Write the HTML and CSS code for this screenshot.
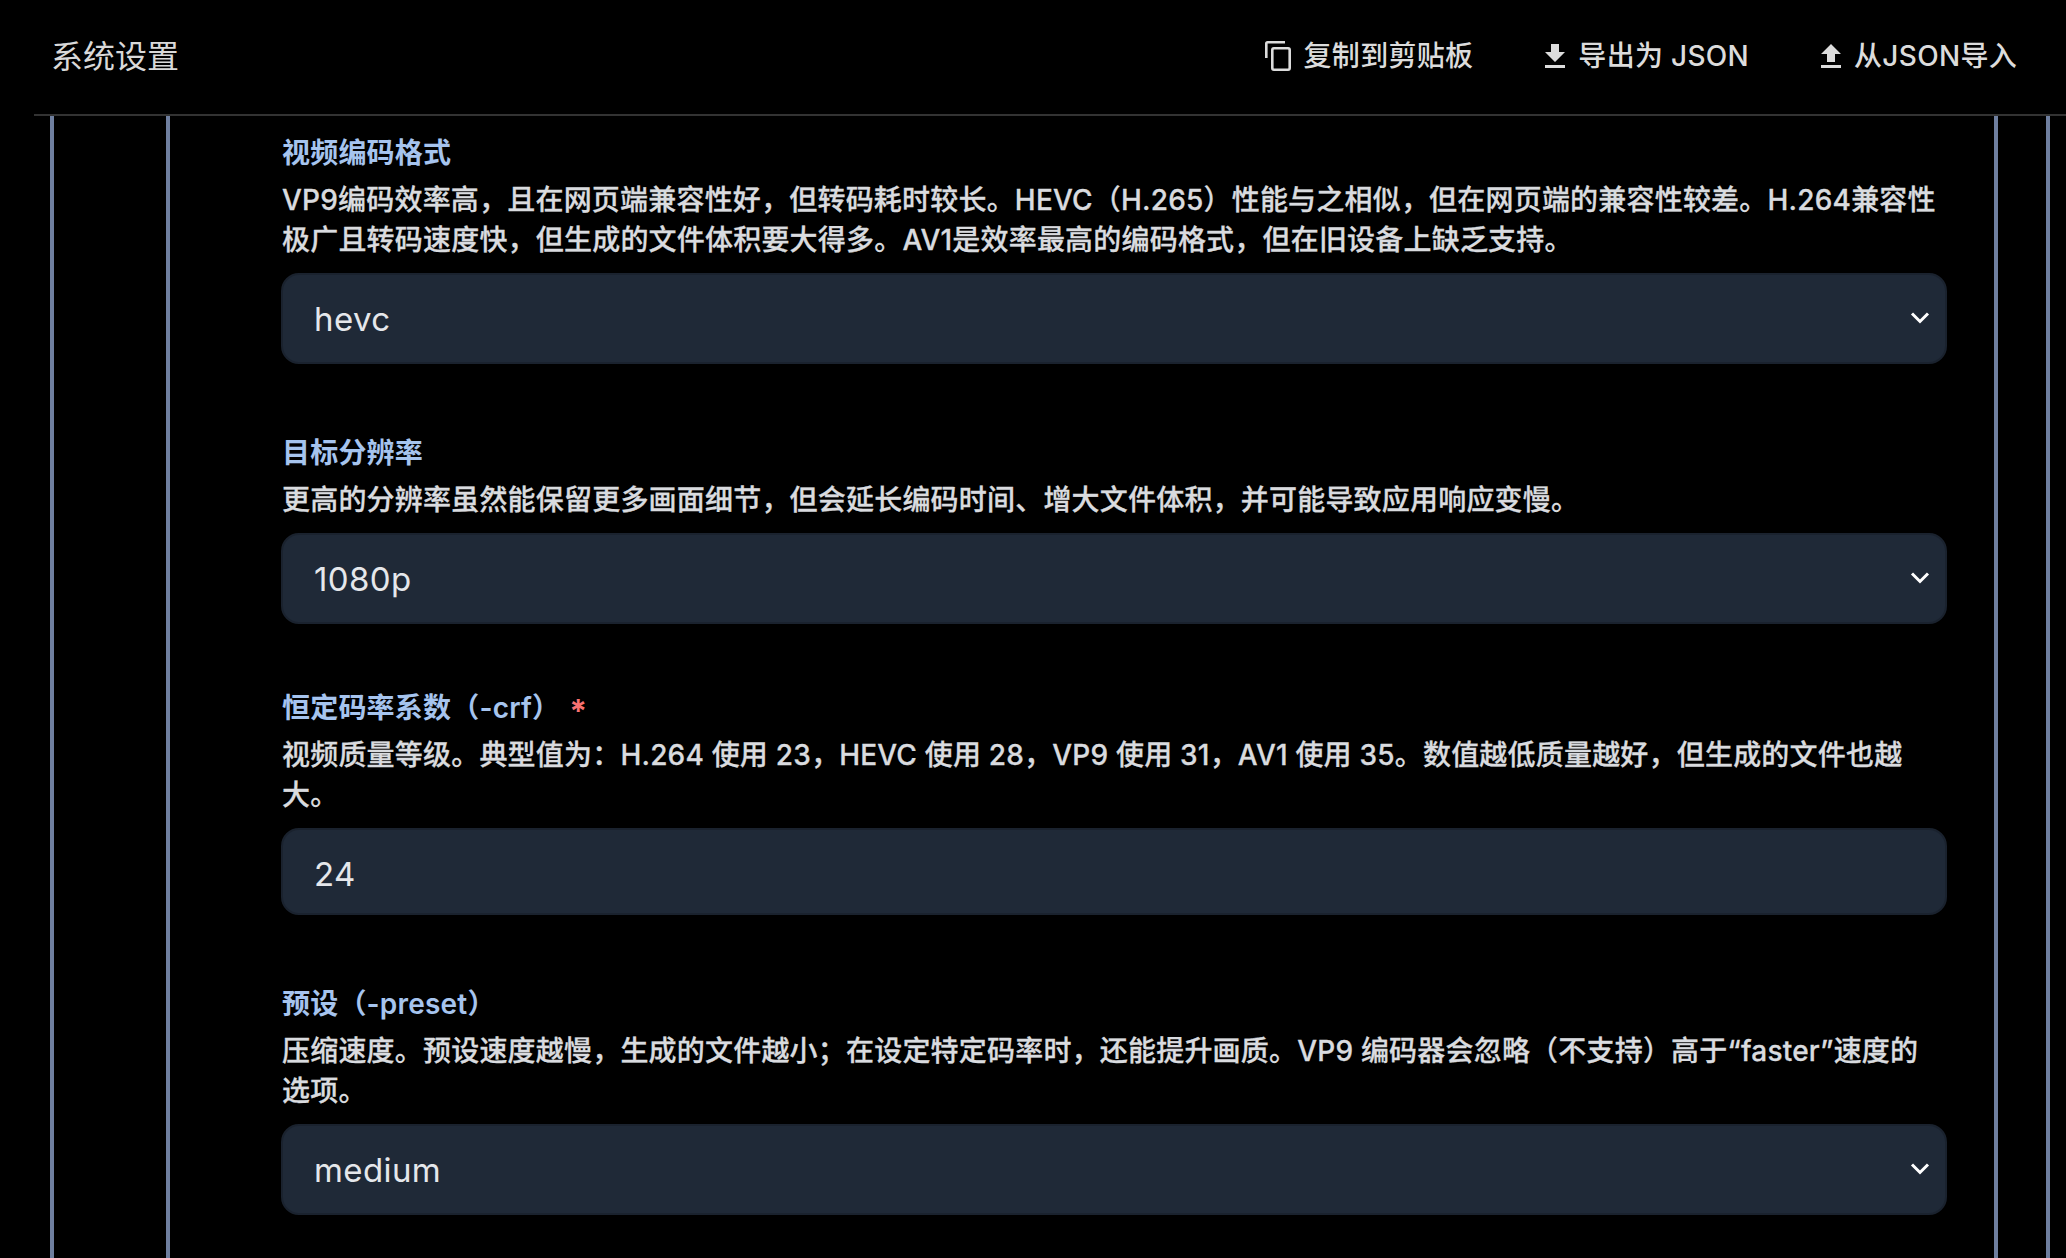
FILE: index.html
```html
<!DOCTYPE html>
<html lang="zh-CN">
<head>
    <meta charset="UTF-8">
    <title>系统设置</title>
    <link rel="stylesheet" href="styles.css">
</head>
<body>
    <header class="topbar">
        <h1 class="topbar-title">系统设置</h1>
        <div class="topbar-actions">
            <button class="action-btn">
                <svg class="icon-copy" viewBox="0 0 26 30" width="26" height="30" fill="none" stroke="currentColor" stroke-width="2.6">
                    <path d="M1.3 17V2.6Q1.3 1.3 2.6 1.3H20"/>
                    <rect x="7.3" y="7.3" width="17.4" height="21.4" rx="1.6"/>
                </svg>
                复制到剪贴板
            </button>
            <button class="action-btn">
                <svg class="icon-arrow" viewBox="0 0 20 24" width="20" height="24" fill="currentColor">
                    <path d="M6 0h8v8h6l-10 10L0 8h6zM0 21h20v3H0z"/>
                </svg>
                导出为 JSON
            </button>
            <button class="action-btn">
                <svg class="icon-arrow" viewBox="0 0 20 24" width="20" height="24" fill="currentColor">
                    <path d="M10 0l10 10h-6v8H6v-8H0zM0 21h20v3H0z"/>
                </svg>
                从JSON导入
            </button>
        </div>
    </header>

    <div class="outer-frame">
        <div class="inner-frame">
            <form class="settings-form">
                <div class="field">
                    <label class="field-label">视频编码格式</label>
                    <p class="field-help">VP9编码效率高，且在网页端兼容性好，但转码耗时较长。HEVC（H.265）性能与之相似，但在网页端的兼容性较差。H.264兼容性极广且转码速度快，但生成的文件体积要大得多。AV1是效率最高的编码格式，但在旧设备上缺乏支持。</p>
                    <div class="select-wrap">
                        <select class="field-control">
                            <option>hevc</option>
                            <option>h264</option>
                            <option>vp9</option>
                            <option>av1</option>
                        </select>
                        <svg class="chevron" viewBox="0 0 20 14" width="20" height="14" fill="none" stroke="currentColor" stroke-width="3"><path d="M2 2.5l8 8 8-8"/></svg>
                    </div>
                </div>

                <div class="field">
                    <label class="field-label">目标分辨率</label>
                    <p class="field-help">更高的分辨率虽然能保留更多画面细节，但会延长编码时间、增大文件体积，并可能导致应用响应变慢。</p>
                    <div class="select-wrap">
                        <select class="field-control">
                            <option>1080p</option>
                            <option>720p</option>
                            <option>1440p</option>
                        </select>
                        <svg class="chevron" viewBox="0 0 20 14" width="20" height="14" fill="none" stroke="currentColor" stroke-width="3"><path d="M2 2.5l8 8 8-8"/></svg>
                    </div>
                </div>

                <div class="field field-required">
                    <label class="field-label">恒定码率系数（-crf）<span class="required-mark">*</span></label>
                    <p class="field-help">视频质量等级。典型值为：H.264 使用 23，HEVC 使用 28，VP9 使用 31，AV1 使用 35。数值越低质量越好，但生成的文件也越大。</p>
                    <input class="field-control field-input" type="text" value="24">
                </div>

                <div class="field">
                    <label class="field-label">预设（-preset）</label>
                    <p class="field-help">压缩速度。预设速度越慢，生成的文件越小；在设定特定码率时，还能提升画质。VP9 编码器会忽略（不支持）高于“faster”速度的选项。</p>
                    <div class="select-wrap">
                        <select class="field-control">
                            <option>medium</option>
                            <option>fast</option>
                            <option>slow</option>
                        </select>
                        <svg class="chevron" viewBox="0 0 20 14" width="20" height="14" fill="none" stroke="currentColor" stroke-width="3"><path d="M2 2.5l8 8 8-8"/></svg>
                    </div>
                </div>
            </form>
        </div>
    </div>
</body>
</html>
```

FILE: styles.css
```css
* {
    box-sizing: border-box;
}
html, body {
    height: 100%;
}
body {
    margin: 0;
    background-color: #000;
    color: #d9dbdf;
    font-family: Inter, "Noto Sans CJK SC", sans-serif;
    overflow: hidden;
    display: flex;
    flex-direction: column;
}

/* Top bar */
.topbar {
    display: flex;
    justify-content: space-between;
    align-items: center;
    height: 116px;
    margin-left: 34px;
    padding: 0 49px 2px 17px;
    border-bottom: 2px solid #333;
    flex-shrink: 0;
}
.topbar-title {
    margin: 0 0 4px;
    font-size: 32px;
    font-weight: 400;
    color: #d9d9d9;
}
.topbar-actions {
    display: flex;
    align-items: center;
    gap: 72px;
}
.action-btn {
    display: flex;
    align-items: center;
    gap: 13px;
    padding: 0;
    background: none;
    border: none;
    color: #dcdcdc;
    font-family: inherit;
    font-size: 28px;
    font-weight: 500;
    line-height: 40px;
    letter-spacing: 0.3px;
    cursor: pointer;
}

/* Nested frames behind the form */
.outer-frame {
    flex: 1;
    min-height: 0;
    margin: 0 16px 0 50px;
    padding: 0 48px 0 112px;
    border-left: 4px solid #6f7f9f;
    border-right: 4px solid #6f7f9f;
}
.inner-frame {
    height: 100%;
    border-left: 4px solid #6f7f9f;
    border-right: 4px solid #6f7f9f;
    padding: 17px 47px 0 111px;
}

/* Fields */
.field {
    margin-bottom: 69px;
}
.field-required {
    margin-top: -5px;
}
.field-label {
    display: block;
    padding-left: 1px;
    font-size: 28px;
    line-height: 40px;
    font-weight: 600;
    letter-spacing: 0.2px;
    color: #a6c4ee;
}
.required-mark {
    margin-left: 9px;
    font-size: 32px;
    line-height: 1;
    font-weight: 700;
    vertical-align: -5px;
    color: #f87171;
}
.field-help {
    margin: 7px 0 13px;
    padding: 0 6px 0 1px;
    font-size: 28px;
    line-height: 40px;
    font-weight: 500;
    letter-spacing: 0.2px;
    color: #d9dbdf;
    -webkit-text-stroke: 0.3px #d9dbdf;
}
.select-wrap {
    position: relative;
}
.field-control {
    display: block;
    width: 100%;
    height: 91px;
    padding: 1px 31px 0;
    background-color: #1f2937;
    border: 2px solid #1a222e;
    border-radius: 18px;
    color: #e5e7eb;
    font-family: inherit;
    font-size: 33px;
    letter-spacing: 0.4px;
    appearance: none;
    outline: none;
}
.field-input {
    height: 87px;
    padding-top: 4px;
}
.chevron {
    position: absolute;
    right: 17px;
    top: 38px;
    color: #fff;
    pointer-events: none;
}
```
